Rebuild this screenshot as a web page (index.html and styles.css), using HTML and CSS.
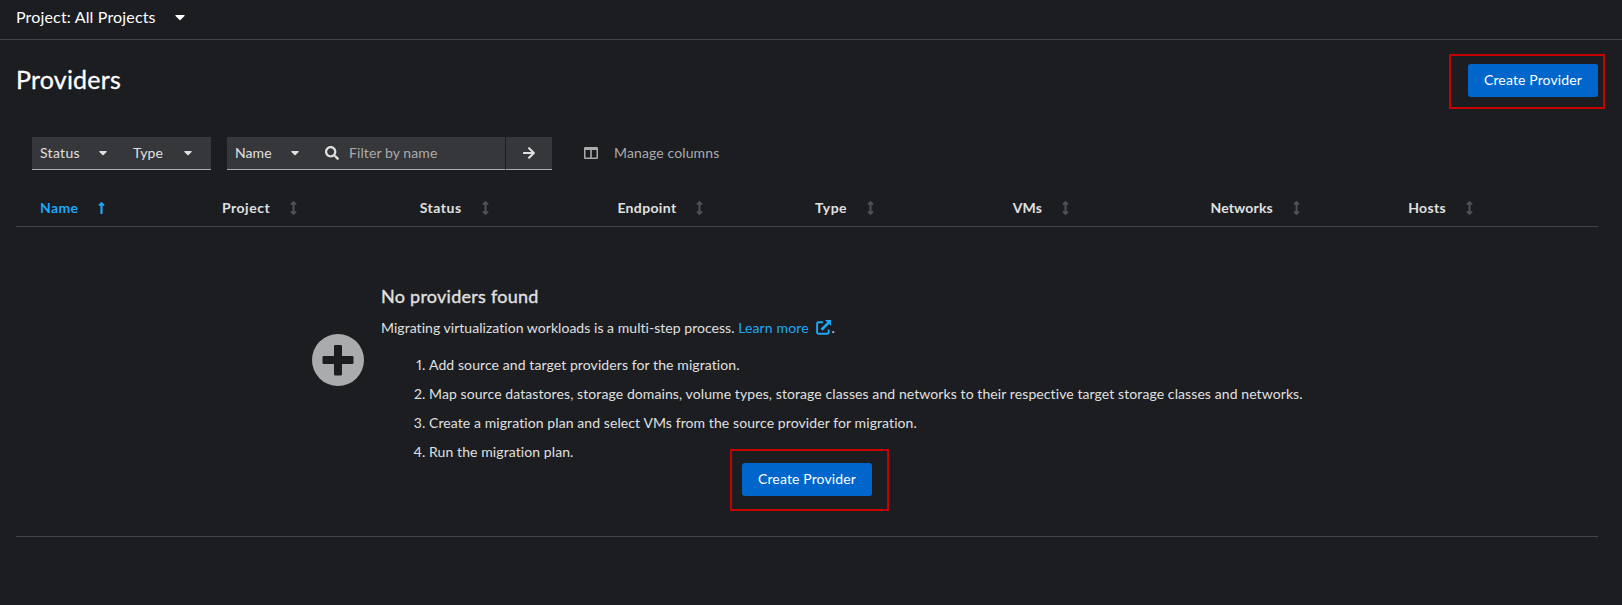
FILE: index.html
```html
<!DOCTYPE html>
<html lang="en">
<head>
<meta charset="utf-8">
<title>Providers</title>
<link rel="stylesheet" href="styles.css">
</head>
<body>
<svg class="defs" width="0" height="0" aria-hidden="true">
  <symbol id="caret" viewBox="0 0 320 192"><path d="M31 0h258c17 0 26 21 14 34L174 163c-8 8-20 8-28 0L17 34C5 21 14 0 31 0z"/></symbol>
  <symbol id="sort" viewBox="0 0 256 512"><path d="M214 377h-50V135h50c21 0 32-26 17-41L145 8c-9-10-25-10-34 0L25 94c-15 15-4 41 17 41h50v242H42c-21 0-32 26-17 41l86 86c9 10 25 10 34 0l86-86c15-15 4-41-17-41z"/></symbol>
  <symbol id="sort-up" viewBox="0 0 256 448"><path d="M88 136v300c0 7 5 12 12 12h56c7 0 12-5 12-12V136h46c22 0 33-26 17-41l-86-86c-9-9-25-9-34 0l-86 86c-15 15-5 41 17 41z"/></symbol>
</svg>

<header class="project-bar">
  <button class="project-toggle">Project: All Projects <svg class="caret caret-lg"><use href="#caret"/></svg></button>
</header>

<main class="page">
  <div class="heading">
    <h1>Providers</h1>
    <div class="highlight highlight-top"><button class="primary">Create Provider</button></div>
  </div>

  <div class="toolbar">
    <div class="filters">
      <button class="select status">Status <svg class="caret"><use href="#caret"/></svg></button>
      <button class="select type">Type <svg class="caret"><use href="#caret"/></svg></button>
    </div>
    <div class="search">
      <button class="select attribute">Name <svg class="caret"><use href="#caret"/></svg></button>
      <label class="field">
        <svg class="search-icon" viewBox="0 0 512 512"><path d="M505 442.700 405.300 343c-4.500-4.500-10.600-7-17-7H372c27.600-35.300 44-79.700 44-128C416 93.100 322.900 0 208 0S0 93.100 0 208s93.100 208 208 208c48.300 0 92.700-16.400 128-44v16.300c0 6.400 2.500 12.500 7 17l99.700 99.700c9.400 9.400 24.600 9.400 33.900 0l28.300-28.300c9.400-9.400 9.400-24.600.1-34zM208 336c-70.700 0-128-57.200-128-128 0-70.700 57.200-128 128-128 70.700 0 128 57.200 128 128 0 70.700-57.200 128-128 128z"/></svg>
        <span>Filter by name</span>
      </label>
      <button class="submit" aria-label="Search"><svg class="arrow" viewBox="0 0 448 448"><path d="m190.500 34.900 22.200-22.200c9.400-9.400 24.600-9.400 33.900 0L441 207c9.400 9.400 9.400 24.600 0 33.900L246.600 435.300c-9.400 9.400-24.600 9.400-33.900 0l-22.200-22.200c-9.500-9.500-9.300-25 .4-34.300L311.400 264H24c-13.300 0-24-10.700-24-24v-32c0-13.300 10.700-24 24-24h287.400L190.900 69.200c-9.800-9.300-10-24.800-.4-34.300z"/></svg></button>
    </div>
    <button class="manage">
      <svg viewBox="0 0 14 12"><path fill-rule="evenodd" d="M1.200 0h11.600Q14 0 14 1.200v9.600Q14 12 12.800 12H1.200Q0 12 0 10.800V1.200Q0 0 1.200 0zM1.500 3.100v7.400h4.700V3.100zM7.800 3.100v7.400h4.700V3.100z"/></svg>
      Manage columns
    </button>
  </div>

  <div class="columns">
    <div class="col active">Name <svg class="sort-up"><use href="#sort-up"/></svg></div>
    <div class="col loose">Project <svg class="sort"><use href="#sort"/></svg></div>
    <div class="col loose">Status <svg class="sort"><use href="#sort"/></svg></div>
    <div class="col">Endpoint <svg class="sort"><use href="#sort"/></svg></div>
    <div class="col loose">Type <svg class="sort"><use href="#sort"/></svg></div>
    <div class="col tight">VMs <svg class="sort"><use href="#sort"/></svg></div>
    <div class="col tight">Networks <svg class="sort"><use href="#sort"/></svg></div>
    <div class="col">Hosts <svg class="sort"><use href="#sort"/></svg></div>
  </div>

  <section class="empty">
    <div class="empty-main">
      <svg class="plus" viewBox="0 0 52 52"><path fill-rule="evenodd" d="M26 0a26 26 0 1 1 0 52 26 26 0 0 1 0-52zM23.200 11q-1.200 0-1.200 1.200V22H11.700q-1.200 0-1.200 1.200v5.600q0 1.200 1.200 1.200H22v10.300q0 1.200 1.200 1.200h5.600q1.200 0 1.200-1.200V30h10.300q1.200 0 1.200-1.200v-5.600q0-1.200-1.200-1.200H30V12.200q0-1.200-1.200-1.200z"/></svg>
      <div class="empty-text">
        <h2>No providers found</h2>
        <p>Migrating virtualization workloads is a multi-step process. <a>Learn more <svg viewBox="0 0 15 15"><path d="M9 0h6v6l-1.900-1.900-6.600 6.600-1.900-1.900 6.600-6.600z"/><path d="M7 2.200H2.300Q1.100 2.200 1.100 3.400v9.200q0 1.200 1.200 1.200h9.200q1.200 0 1.200-1.200V9.500" fill="none" stroke="currentColor" stroke-width="1.900"/></svg></a>.</p>
        <ol>
          <li>Add source and target providers for the migration.</li>
          <li>Map source datastores, storage domains, volume types, storage classes and networks to their respective target storage classes and networks.</li>
          <li>Create a migration plan and select VMs from the source provider for migration.</li>
          <li>Run the migration plan.</li>
        </ol>
      </div>
    </div>
    <div class="highlight highlight-bottom"><button class="primary">Create Provider</button></div>
  </section>
</main>
</body>
</html>
```
FILE: styles.css
```css
* { box-sizing: border-box; }

body {
  margin: 0;
  height: 605px;
  overflow: hidden;
  background: #1b1d21;
  color: #e0e0e0;
  font: 14px/21px Lato, "Liberation Sans", sans-serif;
  letter-spacing: 0.09px;
  font-variant-ligatures: none;
}

button {
  margin: 0;
  padding: 0;
  border: 0;
  background: none;
  color: inherit;
  font: inherit;
  letter-spacing: inherit;
  text-align: left;
}

svg { display: block; flex: none; fill: currentColor; }
.defs { position: absolute; }
.caret { width: 8px; height: 5px; margin-top: 3px; }

.project-bar {
  display: flex;
  height: 40px;
  padding: 4px 16px 0;
  border-bottom: 1px solid #444548;
}
.project-toggle {
  display: flex;
  align-items: center;
  gap: 19px;
  height: 24px;
  color: #fff;
  font-size: 16px;
  letter-spacing: 0.16px;
}
.caret-lg { width: 10px; height: 6px; margin: 3px 0 0; }

.page { padding: 0 24px 0 16px; }

.heading {
  display: flex;
  justify-content: space-between;
  height: 97px;
  padding-top: 14px;
}
h1 {
  margin: 9px 0 0;
  color: #fff;
  font-size: 25px;
  font-weight: 400;
  line-height: 32px;
  letter-spacing: 0.2px;
  -webkit-text-stroke: 0.3px #fff;
}

.highlight { border: 2px solid #c90000; }
.highlight-top { width: 156px; height: 55px; margin-right: -7px; padding: 8px 0 0 17px; }
.highlight-bottom { width: 159px; height: 62px; padding: 12px 0 0 10px; }
.primary {
  display: block;
  width: 130px;
  height: 33px;
  padding-bottom: 2px;
  border-radius: 3px;
  background: #06c;
  color: #fff;
  letter-spacing: 0.13px;
  text-align: center;
}

.toolbar { display: flex; height: 33px; margin-left: 16px; }
.filters, .search { display: flex; background: #36373a; }
.filters { width: 179px; border-bottom: 1px solid #aaabac; }
.search { width: 325px; margin-left: 16px; }
.select {
  display: flex;
  align-items: center;
  justify-content: space-between;
  padding: 0 0 2px 8px;
}
.status { width: 75px; letter-spacing: 0.3px; }
.type { width: 85px; padding-left: 26px; }
.attribute { width: 72px; border-bottom: 1px solid #aaabac; }
.field {
  display: flex;
  align-items: center;
  width: 206px;
  padding: 0 0 2px 26px;
  border-bottom: 1px solid #aaabac;
  color: #aaabac;
}
.search-icon { width: 14px; height: 14px; margin: 1px 10px 0 0; color: #e0e0e0; }
.submit {
  display: grid;
  place-items: center;
  width: 47px;
  border-left: 1px solid #1b1d21;
  border-bottom: 1px solid #aaabac;
}
.arrow { width: 12px; height: 12px; }
.manage {
  display: flex;
  align-items: center;
  gap: 16px;
  margin-left: 32px;
  padding-bottom: 2px;
  color: #aaabac;
  letter-spacing: 0.12px;
}
.manage svg { width: 14px; height: 12px; margin-top: 1px; }

.columns {
  display: grid;
  grid-template-columns: 182px repeat(7, 197.700px);
  height: 57px;
  padding: 27px 0 0 24px;
  border-bottom: 1px solid #444548;
  overflow: hidden;
}
.col {
  display: flex;
  align-items: center;
  gap: 20px;
  height: 21px;
  font-weight: 700;
  letter-spacing: 0.35px;
}
.loose { letter-spacing: 0.5px; }
.tight { letter-spacing: 0.15px; }
.active { color: #1fa7f8; }
.sort { width: 7px; height: 14px; color: #4f5255; }
.sort-up { width: 7px; height: 12px; }

.empty { height: 310px; padding-top: 58px; border-bottom: 1px solid #444548; }
.empty-main { display: flex; height: 164px; padding-left: 296px; }
.plus { width: 52px; height: 52px; margin: 49px 17px 0 0; color: #aaabac; }
h2 {
  margin: 0;
  font-size: 18px;
  font-weight: 400;
  line-height: 23px;
  letter-spacing: 0.26px;
  -webkit-text-stroke: 0.35px #e0e0e0;
}
p { display: flex; white-space: pre; margin: 9px 0 0; letter-spacing: 0.04px; }
a { display: flex; color: #1fa7f8; letter-spacing: 0.14px; }
a svg { width: 15px; height: 15px; margin: 3px 0 0 4px; }
ol { margin: 16px 0 0; padding-left: 48px; }
li + li { margin-top: 8px; }
li::marker { font-variant-numeric: proportional-nums; }
.highlight-bottom { margin-left: 714px; position: relative; }
```
